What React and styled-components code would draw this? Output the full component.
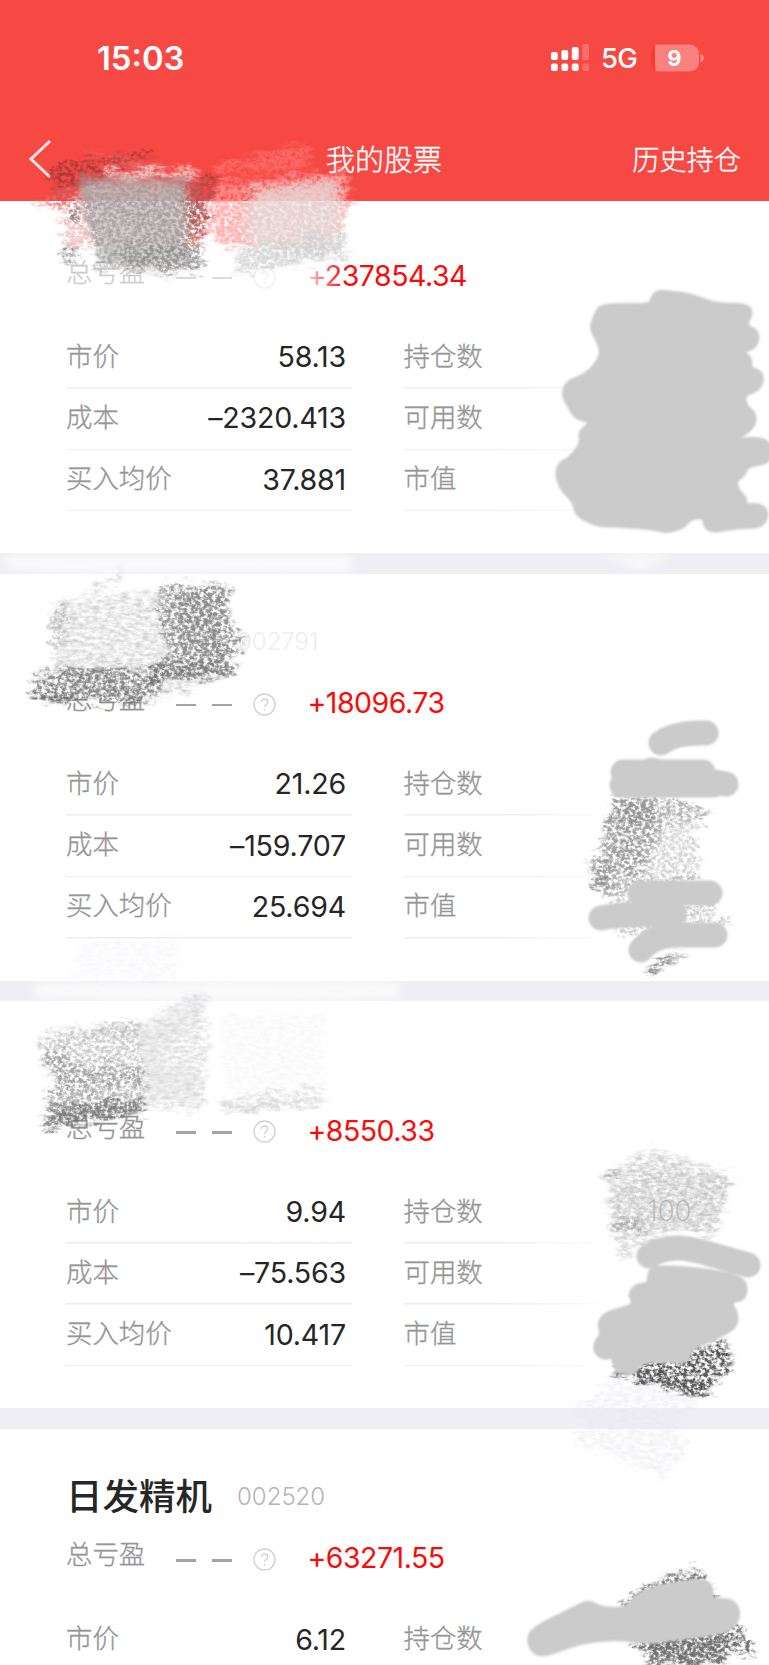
import React from "react";
import styled, { createGlobalStyle } from "styled-components";

const GlobalStyle = createGlobalStyle`
  *, *::before, *::after { box-sizing: border-box; }
  body { margin: 0; background: #fff; }
`;

const cjk = `"Noto Sans CJK SC", sans-serif`;

const Page = styled.main`
  position: relative;
  width: 769px;
  height: 1665px;
  overflow: hidden;
  background: #efeef4;
  font-family: ${cjk};
  color: #262626;
`;

const Header = styled.header`
  height: 201px;
  background: #f64944;
  color: #fff;
`;

const StatusBar = styled.div`
  display: flex;
  align-items: center;
  height: 116px;
  padding: 0 64px 0 97px;
  font-family: Inter, sans-serif;
`;

const Clock = styled.time`
  flex: 1;
  margin-top: -1px;
  font-size: 32.8px;
  font-weight: 600;
  line-height: 40px;
`;

const SignalIcon = styled.svg`
  width: 39px;
  height: 28px;
`;

const Network = styled.span`
  width: 38px;
  margin: 0 11px 0 11px;
  font-size: 27.5px;
  font-weight: 500;
  line-height: 34px;
  letter-spacing: -0.8px;
`;

const Battery = styled.svg`
  width: 55px;
  height: 28px;
  font: 700 22px Inter, sans-serif;
`;

const NavBar = styled.nav`
  display: grid;
  grid-template-columns: 1fr auto 1fr;
  align-items: center;
  height: 85px;
  padding: 0 28px 0 27px;
`;

const BackIcon = styled.svg`
  width: 28px;
  height: 42px;
`;

const Title = styled.h1`
  margin: -2px 0 0;
  font-size: 29px;
  font-weight: 300;
  line-height: 40px;
  -webkit-text-stroke: 0.35px currentColor;
`;

const HistoryLink = styled.a`
  justify-self: end;
  margin-top: -2px;
  font-size: 27.2px;
  font-weight: 300;
  line-height: 40px;
  -webkit-text-stroke: 0.35px currentColor;
`;

const Card = styled.section`
  height: ${(p) => (p.$clipped ? 352 : 407.2)}px;
  margin-bottom: 20.5px;
  padding: ${(p) => (p.$clipped ? 0 : 42)}px 0 0 66px;
  background: #fff;
`;

const StockHead = styled.div`
  display: flex;
  align-items: center;
  height: ${(p) => (p.$clipped ? 42 : 54.5)}px;
`;

const StockName = styled.h2`
  width: 171px;
  margin: -7px 0 0;
  font-size: 36.5px;
  font-weight: 500;
  line-height: 52px;
`;

const StockCode = styled.span`
  margin-top: -2px;
  color: ${(p) => (p.$faint ? "#eeeeee" : "#b5b5b5")};
  font: 300 24px/30px Inter, sans-serif;
`;

const Summary = styled.div`
  display: flex;
  align-items: center;
  height: 66px;
`;

const Label = styled.span`
  margin-top: -3px;
  color: #969696;
  font-size: 26.4px;
  font-weight: 300;
  line-height: 36px;
  -webkit-text-stroke: 0.35px currentColor;
`;

const TotalLabel = styled(Label)`
  width: 110px;
  margin-top: -10px;
`;

const Blank = styled.i`
  width: 19.6px;
  height: 2.6px;
  margin: 4px 16.4px 0 0;
  background: #a3a3a3;
`;

const HelpIcon = styled.svg`
  width: 23px;
  height: 23px;
  margin: 2px 31px 0 5.5px;
`;

const Profit = styled.strong`
  color: #fb0a0a;
  font: 400 28.5px/36px Inter, sans-serif;
  letter-spacing: -0.5px;
`;

const Columns = styled.div`
  display: flex;
  gap: 51.5px;
  padding-top: ${(p) => (p.$clipped ? 18.5 : 18.7)}px;
`;

const Column = styled.dl`
  width: ${(p) => p.$width}px;
  margin: 0;
`;

const Row = styled.div`
  display: flex;
  align-items: center;
  justify-content: space-between;
  height: 61.3px;
  padding: 0 6px 4px 0;
  background: linear-gradient(90deg, #ededee 0 ${(p) => (p.$fading ? "45%" : "100%")}, transparent) left bottom / 100% 1.5px no-repeat;
`;

const Value = styled.dd`
  margin: 2px 0 0;
  font: 400 28.6px/36px Inter, sans-serif;
  letter-spacing: -0.2px;
`;

const Drawing = styled.svg`
  position: absolute;
  inset: 0;
  width: 769px;
  height: 1665px;
  pointer-events: none;
`;

const stocks = [
  { profit: "+237854.34", price: "58.13", cost: "–2320.413", average: "37.881", clipped: true },
  { code: "002791", profit: "+18096.73", price: "21.26", cost: "–159.707", average: "25.694" },
  { profit: "+8550.33", price: "9.94", cost: "–75.563", average: "10.417" },
  { name: "日发精机", code: "002520", profit: "+63271.55", price: "6.12", last: true },
];

function Stock({ stock }) {
  const left = [["市价", stock.price], ["成本", stock.cost], ["买入均价", stock.average]];
  const right = ["持仓数", "可用数", "市值"];
  const count = stock.last ? 1 : 3;
  return (
    <Card $clipped={stock.clipped}>
      <StockHead $clipped={stock.clipped}>
        {!stock.clipped && <StockName>{stock.name}</StockName>}
        {stock.code && <StockCode $faint={!stock.name}>{stock.code}</StockCode>}
      </StockHead>
      <Summary>
        <TotalLabel>总亏盈</TotalLabel>
        <Blank />
        <Blank />
        <HelpIcon viewBox="0 0 23 23" fill="none" stroke="#d2d2d2" strokeWidth="1.4">
          <circle cx="11.5" cy="11.5" r="10.5" />
          <path d="M8.3 9.1c0-4.1 6.5-4 6.5 0 0 2.5-3.2 2.3-3.2 5M11.6 15.7v1.8" />
        </HelpIcon>
        <Profit>{stock.profit}</Profit>
      </Summary>
      <Columns $clipped={stock.clipped}>
        <Column $width={286}>
          {left.slice(0, count).map(([label, value]) => (
            <Row key={label}><Label as="dt">{label}</Label><Value>{value}</Value></Row>
          ))}
        </Column>
        <Column $width={210}>
          {right.slice(0, count).map((label) => (
            <Row key={label} $fading><Label as="dt">{label}</Label></Row>
          ))}
        </Column>
      </Columns>
    </Card>
  );
}

// Grainy stroke textures: slope and offset set how much of the noise survives.
const grains = [
  { id: "dense", slope: 2.4, offset: -0.45, freq: "0.24 0.3" },
  { id: "mid", slope: 3.2, offset: -1.1, freq: "0.24 0.3" },
  { id: "light", slope: 1.8, offset: -0.5, freq: "0.14 0.3" },
];

function Grain({ id, slope, offset, freq }) {
  return (
    <filter id={id} x="-15%" y="-25%" width="130%" height="150%" colorInterpolationFilters="sRGB">
      <feTurbulence type="fractalNoise" baseFrequency="0.05 0.16" numOctaves="3" seed="8" result="wobble" />
      <feTurbulence type="fractalNoise" baseFrequency={freq} numOctaves="4" seed="3" result="noise" />
      <feColorMatrix in="noise" values={`0 0 0 0 0  0 0 0 0 0  0 0 0 0 0  ${slope} 0 0 0 ${offset}`} result="rough" />
      <feGaussianBlur in="rough" stdDeviation="0.5" result="grain" />
      <feGaussianBlur in="SourceGraphic" stdDeviation="2.4" result="soft" />
      <feDisplacementMap in="soft" in2="wobble" scale="22" xChannelSelector="R" yChannelSelector="G" result="edge" />
      <feComposite in="edge" in2="grain" operator="in" />
    </filter>
  );
}

// [points, colour, opacity, texture]
const scribbles = [
  ["54,163 156,150 155,156 120,163 215,174 216,192 206,230 190,245 80,200 50,205", "#7a3030", 0.6, "mid"],
  ["80,150 155,163 120,165", "#ffaaa5", 0.5, "light"],
  ["32,207 56,190 100,182 205,180 210,225 200,250 66,245 60,209", "#f47b7b", 0.7, "mid"],
  ["105,168 195,166 200,180 105,182", "#ffd5d5", 0.9, "dense"],
  ["66,210 90,180 100,245 64,240", "#efd5d5", 0.8, "dense"],
  ["82,180 186,182 190,200 184,240 196,264 160,269 104,264 90,215", "#c9c2c2", 0.85, "solid"],
  ["78,174 195,176 197,200 192,245 205,270 160,275 100,269 86,215", "#858585", 0.45, "mid"],
  ["78,174 86,174 106,268 97,268", "#999999", 0.5, "dense"],
  ["186,182 214,180 209,222 195,240 184,215", "#ad4c4c", 0.75, "mid"],
  ["60,250 80,246 80,258 62,262", "#777777", 0.8, "mid"],
  ["120,246 200,242 205,268 165,273 120,262", "#808080", 0.55, "mid"],
  ["65,205 80,207 80,224 66,222", "#686868", 0.7, "mid"],
  ["213,166 309,142 313,152 300,170 213,176", "#ff9b98", 0.4, "dense"],
  ["213,184 343,169 350,198 342,231 320,240 222,246 210,230", "#ff9d9d", 0.8, "dense"],
  ["256,190 336,180 340,228 325,254 246,240", "#ece2e2", 0.7, "solid"],
  ["246,186 344,176 347,232 330,258 240,240", "#d9d2d2", 0.5, "mid"],
  ["242,245 345,234 347,257 236,273 233,265", "#cccccc", 0.75, "dense"],

  ["124,567 135,560 80,597 120,582", "#9c9c9c", 0.6, "light"],
  ["50,608 110,593 165,590 168,660 150,675 48,672 58,638", "#999999", 0.45, "light"],
  ["50,608 72,600 66,645 50,655", "#999999", 0.5, "mid"],
  ["160,586 233,584 228,628 242,630 239,654 232,676 145,682 166,650 158,612", "#737373", 0.75, "mid"],
  ["175,592 222,594 226,660 180,650", "#808080", 0.45, "dense"],
  ["160,664 220,657 230,675 150,682", "#707070", 0.6, "dense"],
  ["40,668 66,668 113,666 158,668 165,684 154,702 72,703 31,698 33,690", "#686868", 0.75, "mid"],
  ["33,692 66,694 72,703 31,699", "#606060", 0.8, "dense"],
  ["66,668 113,666 150,690 66,692", "#808080", 0.4, "dense"],
  ["155,695 158,684 205,681 180,694", "#999999", 0.6, "light"],

  ["36,1037 68,1029 140,1020 145,1105 42,1101 57,1083 43,1060", "#8f8f8f", 0.45, "mid"],
  ["60,1030 142,1022 206,990 206,1110 143,1110 140,1040", "#a8a8a8", 0.45, "light"],
  ["140,1026 206,994 198,1020 155,1062 200,1070 198,1100 145,1100", "#dddddd", 0.35, "solid"],
  ["42,1058 60,1050 74,1065 145,1067 144,1087 44,1100 57,1080", "#808080", 0.5, "mid"],
  ["50,1102 141,1096 143,1114 46,1132 42,1124", "#606060", 0.6, "mid"],
  ["50,1104 141,1098 141,1112 46,1128", "#707070", 0.65, "dense"],
  ["222,1096 324,1084 322,1102 224,1112", "#bbbbbb", 0.5, "light"],
  ["222,1106 324,1100 322,1104 224,1112", "#bbbbbb", 0.6, "dense"],
  ["220,1014 322,1014 330,1078 224,1092", "#d8d8d8", 0.2, "light"],

  ["611,796 674,797 711,813 695,828 700,878 609,898 591,880 605,830", "#777777", 0.55, "mid"],
  ["611,798 650,798 660,830 640,870 600,875 607,830", "#888888", 0.5, "mid"],
  ["622,802 648,800 656,822 620,824", "#888888", 0.45, "dense"],
  ["665,825 705,820 703,875 640,880", "#ffffff", 0.45, "solid"],
  ["584,861 602,858 614,880 596,888", "#888888", 0.5, "mid"],
  ["592,878 609,878 612,887 592,886", "#888888", 0.8, "dense"],
  ["610,890 720,900 709,923 616,936", "#aaaaaa", 0.6, "mid"],
  ["721,918 731,917 726,925 716,924", "#777777", 0.7, "mid"],
  ["648,966 684,951 681,956 650,972", "#555555", 0.9, "dense"],

  ["602,1172 630,1161 650,1145 735,1177 719,1218 716,1235 670,1231 620,1262 612,1225", "#8e8e8e", 0.45, "light"],
  ["612,1190 650,1165 735,1177 719,1218 716,1235 612,1225", "#aaaaaa", 0.35, "mid"],
  ["606,1224 635,1219 655,1236 608,1230", "#888888", 0.6, "mid"],
  ["602,1172 622,1170 618,1175 604,1177", "#777777", 0.8, "mid"],
  ["612,1364 637,1360 692,1350 725,1338 733,1353 725,1378 713,1381 711,1396 632,1380", "#505050", 0.95, "mid"],
  ["613,1366 711,1389 711,1396 613,1374", "#505050", 0.8, "dense"],

  ["622,1600 650,1585 688,1570 699,1568 714,1597 738,1624 757,1648 750,1655 728,1650 725,1665 648,1665 635,1640", "#585858", 0.85, "mid"],
  ["642,1641 725,1634 724,1665 654,1665", "#707070", 0.75, "dense"],
];

const washes = [
  ["6,555 350,555 352,573 60,574 6,568", 0.7],
  ["35,983 150,983 200,980 400,983 397,999 200,1002 35,998", 0.7],
  ["600,553 675,553 640,572", 0.5],
];

// Soft marker strokes.
const strokes = [
  "M661 743Q675 732 706 733M623 772H703M651 770Q680 776 726 784M622 785H714M640 893H710M601 918Q620 914 674 914M641 950Q655 933 685 935H715",
  "M649 1256C675 1239 700 1252 748 1265",
];

// Filled marker areas: [x, y, points in thirds of a pixel].
const areas = [
  [384, 280, "800,60 816,34 850,34 920,44 1000,74 1090,72 1105,100 1084,138 1118,150 1124,178 1109,206 1075,214 1102,235 1098,264 1130,274 1138,300 1122,332 1080,344 1086,378 1112,398 1114,430 1090,460 1045,478 1160,473 1160,550 1090,556 1080,588 1055,600 1062,632 1087,655 1082,675 1125,672 1148,688 1148,718 1126,742 1060,742 985,757 962,740 960,712 918,716 900,742 845,758 815,746 690,738 640,738 575,706 570,665 530,628 516,578 526,550 555,535 592,490 584,455 625,425 575,416 555,380 534,345 548,304 600,287 638,250 652,215 639,180 618,145 635,100 652,73 800,74"],
  [500, 1130, "445,440 452,417 478,409 590,415 690,432 732,449 741,480 730,510 690,515 710,545 712,580 690,605 600,645 570,665 560,700 430,690 405,732 360,728 340,705 340,680 310,687 285,668 283,640 305,612 294,578 320,545 405,527 386,495 405,465 445,462"],
  [480, 1540, "142,300 158,265 290,199 325,183 370,205 445,205 465,164 540,138 640,120 684,123 699,155 692,180 745,177 770,195 778,220 768,254 730,276 690,285 560,300 500,310 440,298 350,300 270,318 200,346 160,341"],
];

// Rounds a closed outline by curving through the middle of each side.
function roundOutline(text) {
  const points = text.split(" ").map((pair) => pair.split(",").map(Number));
  const middle = (a, b) => `${(a[0] + b[0]) / 2} ${(a[1] + b[1]) / 2}`;
  const start = middle(points[points.length - 1], points[0]);
  const curves = points.map((p, i) => `Q${p[0]} ${p[1]} ${middle(p, points[(i + 1) % points.length])}`);
  return `M${start}${curves.join("")}Z`;
}

function Sketches() {
  return (
    <Drawing viewBox="0 0 769 1665" aria-hidden="true">
      <defs>
        {grains.map((g) => <Grain key={g.id} {...g} />)}
        <filter id="solid" x="-20%" y="-40%" width="140%" height="180%"><feGaussianBlur stdDeviation="4" /></filter>
        <filter id="edge"><feGaussianBlur stdDeviation="1.2" /></filter>
        <linearGradient id="veil">
          <stop offset="0" stopColor="#fff" stopOpacity="0.5" />
          <stop offset="0.88" stopColor="#fff" stopOpacity="0.7" />
          <stop offset="1" stopColor="#fff" stopOpacity="0" />
        </linearGradient>
      </defs>
      <path d="M60 256H345V290H60Z" fill="url(#veil)" />
      <path d="M64 686H148V696L64 700Z" fill="#fff" opacity=".5" />
      {washes.map(([points, opacity]) => (
        <polygon key={points} points={points} fill="#fff" opacity={opacity} filter="url(#solid)" />
      ))}
      <polygon points="80,940 180,935 175,980 72,980" fill="#eeedf7" opacity=".45" filter="url(#light)" />
      <polygon points="612,1380 705,1396 672,1428 692,1445 664,1480 574,1440 576,1430 590,1428 570,1408" fill="#e9e8f2" opacity=".7" filter="url(#light)" />
      {scribbles.map(([points, color, opacity, grain], i) => (
        <polygon key={i} points={points} fill={color} opacity={opacity} filter={`url(#${grain})`} />
      ))}
      <text x="647" y="1221" fill="#b5b5b5" fontFamily="Inter" fontSize="28" fontWeight="200">100</text>
      <g fill="none" stroke="#cbcbcb" strokeWidth="25" strokeLinecap="round" strokeLinejoin="round" filter="url(#edge)">
        {strokes.map((d) => <path key={d} d={d} />)}
        {areas.map(([x, y, points]) => (
          <path key={y} d={roundOutline(points)} transform={`translate(${x} ${y}) scale(.3333)`} fill="#cbcbcb" strokeWidth="9" />
        ))}
      </g>
    </Drawing>
  );
}

const signal = [[0, 8, 8], [10.4, 6, 10], [20.8, 3, 13], [31.2, 0, 16]];

export default function App() {
  return (
    <Page>
      <GlobalStyle />
      <Header>
        <StatusBar>
          <Clock>15:03</Clock>
          <SignalIcon viewBox="0 0 39 28" fill="#fff">
            {signal.map(([x, y, h], i) => (
              <g key={x} opacity={i === 3 ? 0.2 : 1}>
                <rect x={x} y={y} width="6.8" height={h} rx="2" />
                <rect x={x} y="19.5" width="6.8" height="7.5" rx="2" />
              </g>
            ))}
          </SignalIcon>
          <Network>5G</Network>
          <Battery viewBox="0 0 55 28">
            <path d="M5 1.5C1.5 3 1 7 1 14s.5 10.500 4 12.500Z" fill="#ff382c" />
            <path d="M5 .5H38C46 .5 49 5 49 10V18C49 23 46 27.500 38 27.500H9Q5 27.500 5 24Z" fill="#fff" fillOpacity=".31" />
            <path d="M50.500 10Q54 11 54 14T50.500 18Z" fill="#fff" fillOpacity=".35" />
            <text x="24.500" y="21.500" textAnchor="middle" fill="#fff">9</text>
          </Battery>
        </StatusBar>
        <NavBar>
          <BackIcon viewBox="0 0 28 42" fill="none" stroke="#ffe4e2" strokeWidth="3">
            <path d="M23 3 4 21l19 18" />
          </BackIcon>
          <Title>我的股票</Title>
          <HistoryLink>历史持仓</HistoryLink>
        </NavBar>
      </Header>
      {stocks.map((stock) => <Stock key={stock.profit} stock={stock} />)}
      <Sketches />
    </Page>
  );
}
